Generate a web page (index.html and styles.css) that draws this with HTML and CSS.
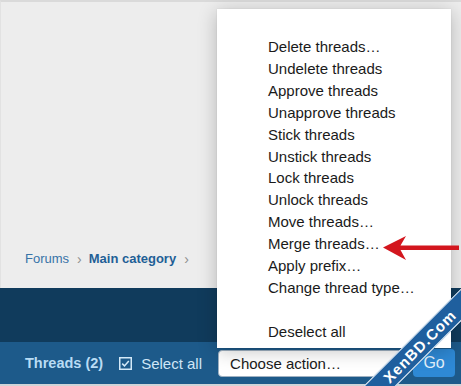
FILE: index.html
```html
<!DOCTYPE html>
<html>
<head>
<meta charset="utf-8">
<link rel="stylesheet" href="styles.css">
</head>
<body>
<div class="page">
  <div class="top">
    <nav class="crumbs">
      <a class="crumb">Forums</a>
      <span class="chev">›</span>
      <a class="crumb strong">Main category</a>
      <span class="chev">›</span>
    </nav>
  </div>
  <div class="bar-dark"></div>
  <div class="bar-blue">
    <span class="title">Threads (2)</span>
    <label class="selall">
      <svg class="cb" width="13" height="13" viewBox="0 0 13 13"><rect x="0.75" y="0.75" width="11.5" height="11.5" fill="none" stroke="currentColor" stroke-width="1.5"/><path d="M3.2 6.6 L5.5 8.9 L9.8 3.9" fill="none" stroke="currentColor" stroke-width="1.5"/></svg>
      <span>Select all</span>
    </label>
    <div class="select">Choose action…</div>
    <div class="go">Go</div>
  </div>
  <div class="edge"></div>

  <ul class="menu">
    <li>Delete threads…</li>
    <li>Undelete threads</li>
    <li>Approve threads</li>
    <li>Unapprove threads</li>
    <li>Stick threads</li>
    <li>Unstick threads</li>
    <li>Lock threads</li>
    <li>Unlock threads</li>
    <li>Move threads…</li>
    <li>Merge threads…</li>
    <li>Apply prefix…</li>
    <li>Change thread type…</li>
    <li class="blank">&nbsp;</li>
    <li>Deselect all</li>
  </ul>

  <svg class="arrow" width="80" height="30" viewBox="380 233 80 30">
    <path d="M383 247.5 L406 236 L400.5 245.5 L459 245.5 L459 250 L400.5 250 L406 260 Z" fill="#d3161e"/>
  </svg>

  <div class="wm"><span>XenBD.Com</span></div>
</div>
</body>
</html>
```

FILE: styles.css
```css
html, body {
  margin: 0;
  padding: 0;
}
body {
  font-family: "Liberation Sans", Arial, Helvetica, sans-serif;
  background: #ededed;
}
.page {
  position: relative;
  width: 461px;
  height: 386px;
  overflow: hidden;
  background: #ededed;
}
.top {
  box-sizing: border-box;
  height: 288px;
  border-top: 2px solid #dadada;
  border-left: 1px solid #e2e2e2;
  display: flex;
  align-items: flex-end;
  padding: 0 0 19px 24px;
}
.crumbs {
  display: flex;
  align-items: center;
  font-size: 13px;
  line-height: 20px;
}
.crumb {
  color: #3773a8;
}
.crumb.strong {
  font-weight: bold;
  color: #1f5f96;
}
.chev {
  color: #8f8f8f;
  font-size: 14px;
  margin: 0 7px 0 8px;
}
.bar-dark {
  height: 54px;
  background: #103b5c;
}
.bar-blue {
  height: 42px;
  background: #1d5a8a;
  display: flex;
  align-items: center;
  padding-left: 25px;
}
.title {
  color: #b9dcf4;
  font-weight: bold;
  font-size: 14.5px;
}
.selall {
  display: flex;
  align-items: center;
  margin-left: 16px;
  color: #cfe6f7;
  font-size: 15px;
}
.cb {
  margin-right: 9px;
  color: #d3e9f8;
}
.select {
  box-sizing: border-box;
  margin-left: 16px;
  width: 189px;
  height: 27px;
  background: #fff;
  border: 1px solid #9fb1c2;
  border-radius: 4px;
  font-size: 15px;
  color: #1a1a1a;
  padding-left: 11px;
  line-height: 25px;
}
.go {
  box-sizing: border-box;
  margin-left: 6px;
  width: 42px;
  height: 28px;
  background: #2e89d5;
  border-radius: 4px;
  color: #e3f1fc;
  font-size: 16px;
  text-align: center;
  line-height: 28px;
}
.edge {
  height: 2px;
  background: #cfd4d8;
}
.menu {
  position: absolute;
  left: 217px;
  top: 9px;
  width: 234px;
  margin: 0;
  padding: 27px 0 5px 51px;
  box-sizing: border-box;
  list-style: none;
  background: #fff;
  box-shadow: 0 3px 18px rgba(0, 0, 0, 0.24), 0 0 1px rgba(0, 0, 0, 0.15);
  font-size: 15px;
  line-height: 21.9px;
  color: #1a1a1a;
}
.arrow {
  position: absolute;
  left: 380px;
  top: 233px;
}
.wm {
  position: absolute;
  left: 299px;
  top: 335px;
  width: 240px;
  height: 21px;
  transform: rotate(-45deg);
  transform-origin: 120px 10.5px;
  background: #1f5f9e;
  border-top: 1.5px solid #f2f7fb;
  border-bottom: 1.5px solid #f2f7fb;
  display: flex;
  align-items: center;
  justify-content: center;
}
.wm span {
  color: #fff;
  font-weight: bold;
  font-size: 15px;
  letter-spacing: 1px;
}
```
